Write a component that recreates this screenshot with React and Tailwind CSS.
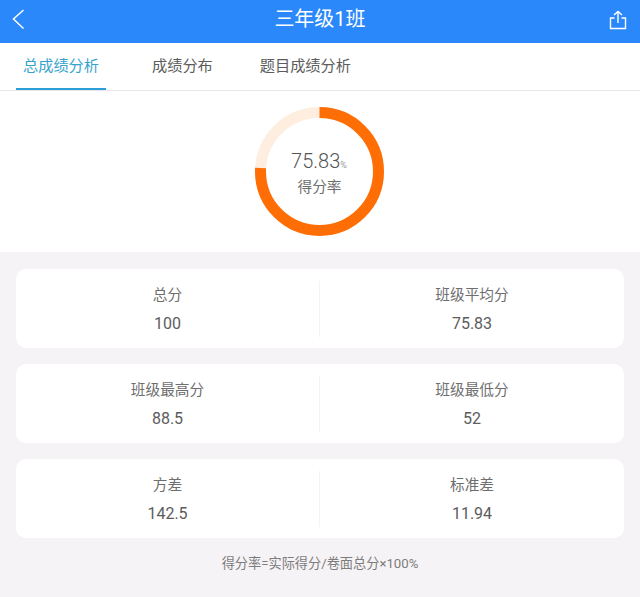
import React from 'react';

const font = "font-['Roboto','Noto_Sans_CJK_SC',sans-serif]";

const rows = [
  [{ label: '总分', value: '100' }, { label: '班级平均分', value: '75.83' }],
  [{ label: '班级最高分', value: '88.5' }, { label: '班级最低分', value: '52' }],
  [{ label: '方差', value: '142.5' }, { label: '标准差', value: '11.94' }],
];

const Ring = () => {
  const r = 59;
  const c = 2 * Math.PI * r;
  return (
    <svg width="129" height="129" viewBox="0 0 129 129" className="absolute inset-0 -rotate-90">
      <circle cx="64.5" cy="64.5" r={r} fill="none" stroke="#fdeee0" strokeWidth="11" />
      <circle cx="64.5" cy="64.5" r={r} fill="none" stroke="#ff6d05" strokeWidth="11" strokeDasharray={`${c * 0.7583} ${c}`} />
    </svg>
  );
};

const App = () => {
  return (
    <div className={`w-[640px] h-[597px] overflow-hidden bg-[#f6f3f6] ${font}`}>
      {/* Header */}
      <div className="h-[43px] bg-[#2b88fb] flex items-center justify-between pl-[12px] pr-[13px] relative">
        <svg width="12" height="21" viewBox="0 0 12 21" fill="none" stroke="#fff" strokeWidth="1.5" className="mb-[4px]">
          <path d="M11.5 1 L1.5 10 L11.5 19.5" />
        </svg>
        <span className="absolute left-0 right-0 text-center text-[20px] leading-[43px] text-white mt-[-4px] pointer-events-none">三年级1班</span>
        <svg width="18" height="20" viewBox="0 0 18 20" fill="none" stroke="#fff" strokeWidth="1.4" className="mb-[3px]">
          <path d="M5.5 8 H1.5 V18.5 H16.5 V8 H12.5" />
          <path d="M9 13 V1.5 M5 5 L9 1.5 L13 5" />
        </svg>
      </div>

      {/* Tabs */}
      <div className="h-[48px] bg-white border-b border-[#e6e6e8] flex items-stretch pl-[16px] text-[15.2px]">
        <div className="w-[90px] h-[47px] border-b-2 border-[#2d9fd8] text-center leading-[46px] text-[#35a3cc]">总成绩分析</div>
        <div className="ml-[46px] leading-[46px] text-[#5c5c5c]">成绩分布</div>
        <div className="ml-[47px] leading-[46px] text-[#5c5c5c]">题目成绩分析</div>
      </div>

      {/* Ring */}
      <div className="h-[161px] bg-white flex justify-center pt-[16px] pr-[1px]">
        <div className="relative w-[129px] h-[129px] flex flex-col items-center">
          <Ring />
          <div className="mt-[42px] flex items-baseline text-[#555] pr-[1px]">
            <span className="text-[20px] leading-[24px] font-light">75.83</span>
            <span className="text-[9px] text-[#999]">%</span>
          </div>
          <div className="mt-[4px] text-[14.7px] leading-[20px] text-[#6e6e6e]">得分率</div>
        </div>
      </div>

      {/* Stat cards */}
      <div className="pt-[17px] px-[16px] flex flex-col gap-[16px]">
        {rows.map((row, i) => (
          <div key={i} className="h-[79px] bg-white rounded-[10px] flex items-center">
            {row.map((item, j) => (
              <div
                key={j}
                className={`w-1/2 h-[56px] flex flex-col items-center pt-[4px] ${j === 0 ? 'border-r border-[#f3f3f3]' : ''}`}
              >
                <div className="text-[14.7px] leading-[20px] text-[#6e6e6e]">{item.label}</div>
                <div className="mt-[9px] text-[16px] leading-[20px] text-[#5c5c5c]">{item.value}</div>
              </div>
            ))}
          </div>
        ))}
      </div>

      <div className="mt-[17px] text-center text-[13.2px] leading-[18px] text-[#7c7c7c]">得分率=实际得分/卷面总分×100%</div>
    </div>
  );
};

export default App;
